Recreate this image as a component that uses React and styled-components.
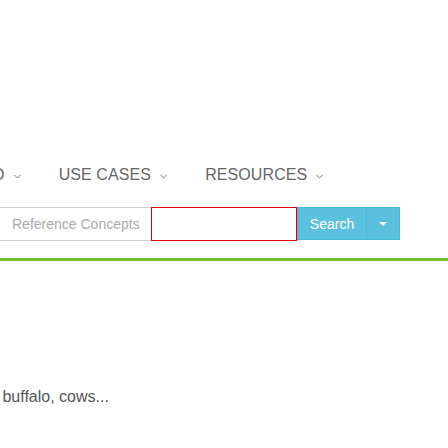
import styled, { createGlobalStyle } from 'styled-components'

const GlobalStyle = createGlobalStyle`
    html, body {
        margin: 0;
        padding: 0;
        background: #fff;
        overflow: hidden;
    }
    body {
        font-family: "Liberation Sans", Arial, sans-serif;
        width: 448px;
        height: 448px;
    }
`

const Page = styled.div`
    width: 448px;
    height: 448px;
    overflow: hidden;
    padding-top: 166px;
    box-sizing: border-box;
`

const Nav = styled.nav`
    display: flex;
    align-items: center;
    gap: 38px;
    margin-left: -34px;
    height: 18px;
`

const NavItem = styled.div`
    display: flex;
    align-items: center;
    gap: 9px;
    font-size: 16px;
    color: #666;
    white-space: nowrap;
    letter-spacing: 0.1px;

    svg {
        margin-top: 2px;
    }
`

const SearchRow = styled.div`
    display: flex;
    margin-top: 23px;
    height: 34px;
`

const ConceptBox = styled.div`
    width: 151px;
    box-sizing: border-box;
    border-top: 1px solid #ccc;
    border-bottom: 1px solid #ccc;
    display: flex;
    align-items: center;
    padding-left: 12px;
    font-size: 14px;
    color: #aaa;
`

const QueryInput = styled.input`
    width: 146px;
    height: 34px;
    box-sizing: border-box;
    border: 1px solid #e00000;
    outline: none;
    margin: 0;
    padding: 0 8px;
    font-family: inherit;
    font-size: 14px;
`

const Button = styled.button`
    height: 33px;
    box-sizing: border-box;
    background: #5bc0de;
    border: 1px solid #46b8da;
    color: #fff;
    font-family: "Liberation Sans", Arial, sans-serif;
    font-size: 14px;
    margin: 0;
    padding: 0;
    width: ${p => (p.$caret ? '34px' : '70px')};
    display: flex;
    align-items: center;
    justify-content: center;
    margin-left: ${p => (p.$caret ? '-1px' : '0')};
`

const GreenRule = styled.div`
    height: 3px;
    background: #70bf2b;
    margin-top: 17px;
`

const Teaser = styled.p`
    margin: 127px 0 0;
    font-size: 16px;
    color: #555;
    white-space: nowrap;
    text-indent: -10px;

    a {
        color: #337ab7;
        text-decoration: none;
    }
`

function Chevron() {
    return (
        <svg width="7" height="5" viewBox="0 0 7 5">
            <path d="M0.5 1 L3.5 4 L6.5 1" fill="none" stroke="#777" strokeWidth="1" />
        </svg>
    )
}

const navItems = ['INFO', 'USE CASES', 'RESOURCES']

export default function App() {
    return (
        <>
            <GlobalStyle />
            <Page>
                <Nav>
                    {navItems.map((item, index) => (
                        <NavItem key={index}>
                            <span>{item}</span>
                            <Chevron />
                        </NavItem>
                    ))}
                </Nav>

                <SearchRow>
                    <ConceptBox>Reference Concepts</ConceptBox>
                    <QueryInput type="text" />
                    <Button>Search</Button>
                    <Button $caret>
                        <svg width="8" height="4" viewBox="0 0 8 4">
                            <path d="M0 0 L8 0 L4 4 Z" fill="#fff" />
                        </svg>
                    </Button>
                </SearchRow>

                <GreenRule />

                <Teaser>
                    <a href="#">s</a> buffalo, cows...
                </Teaser>
            </Page>
        </>
    )
}
